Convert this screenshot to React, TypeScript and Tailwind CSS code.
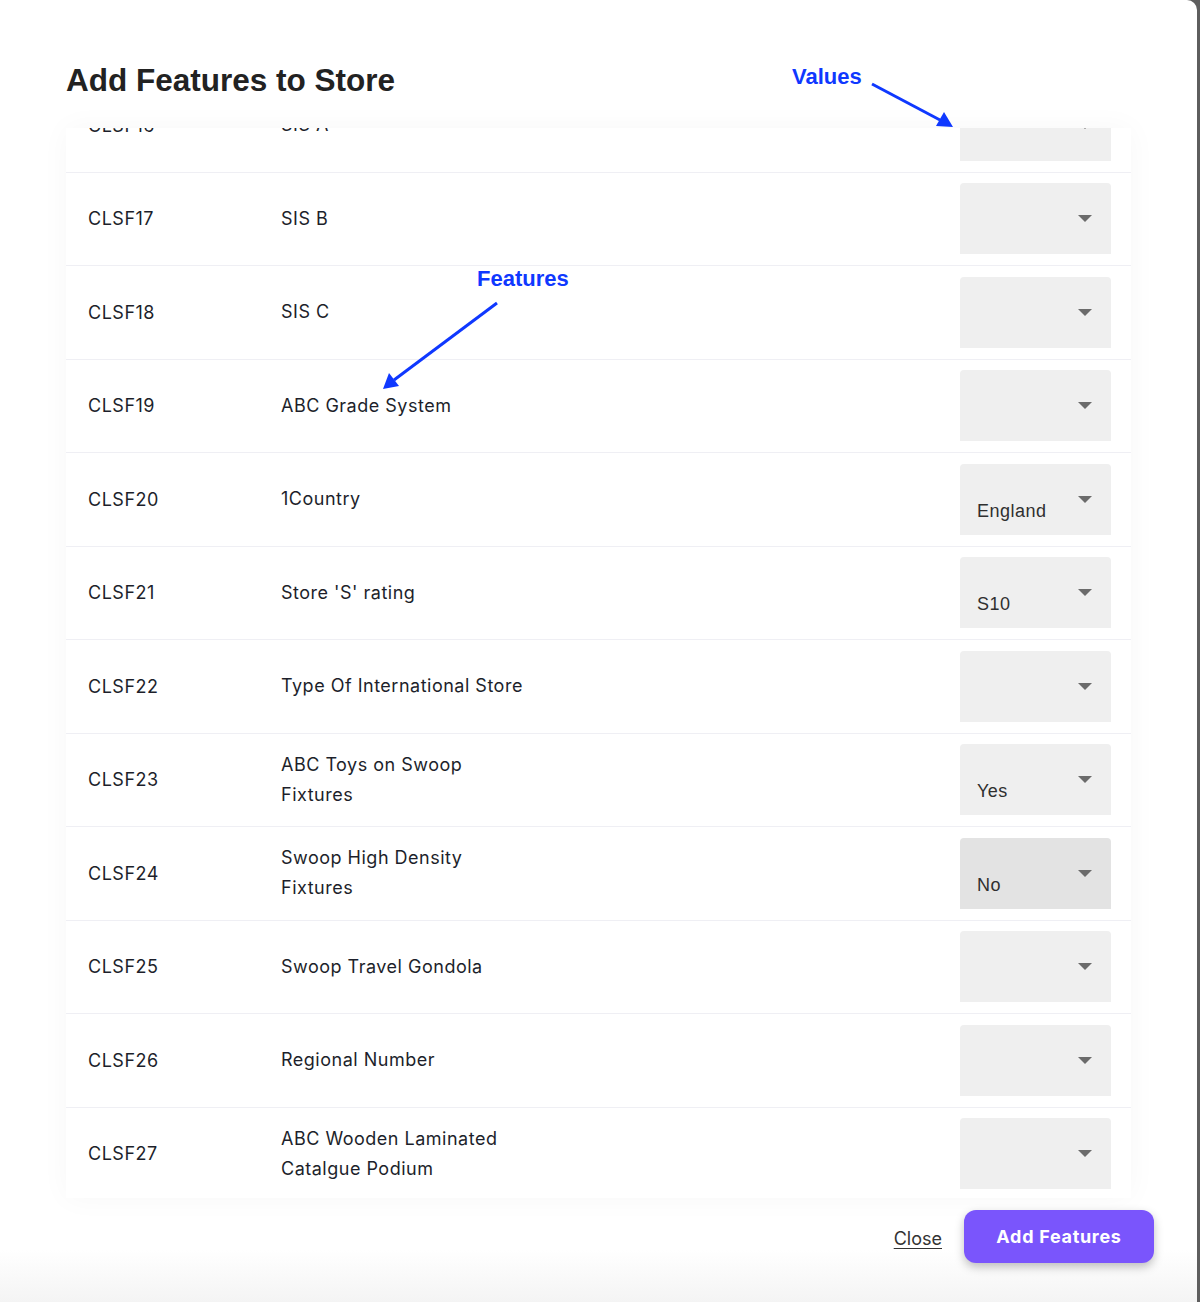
import React from "react";

type Row = { code: string; name: string[]; value?: string; hover?: boolean };

const rows: Row[] = [
  { code: "CLSF16", name: ["SIS A"] },
  { code: "CLSF17", name: ["SIS B"] },
  { code: "CLSF18", name: ["SIS C"] },
  { code: "CLSF19", name: ["ABC Grade System"] },
  { code: "CLSF20", name: ["1Country"], value: "England" },
  { code: "CLSF21", name: ["Store 'S' rating"], value: "S10" },
  { code: "CLSF22", name: ["Type Of International Store"] },
  { code: "CLSF23", name: ["ABC Toys on Swoop", "Fixtures"], value: "Yes" },
  { code: "CLSF24", name: ["Swoop High Density", "Fixtures"], value: "No", hover: true },
  { code: "CLSF25", name: ["Swoop Travel Gondola"] },
  { code: "CLSF26", name: ["Regional Number"] },
  { code: "CLSF27", name: ["ABC Wooden Laminated", "Catalgue Podium"] },
];

function SelectBox({ value, hover }: { value?: string; hover?: boolean }) {
  return (
    <div
      className={`relative w-[151px] h-[71px] rounded-t-[4px] ${hover ? "bg-[#e3e3e3]" : "bg-[#efefef]"}`}
    >
      {value && (
        <span
          className="absolute left-[17px] bottom-[15px] text-[18px] leading-none text-[#2f2f2f]"
          style={{ fontFamily: "'Liberation Sans', Arial, sans-serif" }}
        >
          {value}
        </span>
      )}
      <svg className="absolute right-[19px] top-[32px]" width="14" height="7" viewBox="0 0 14 7">
        <path d="M0 0 L14 0 L7 7 Z" fill="#6b6b6b" />
      </svg>
    </div>
  );
}

export default function App() {
  return (
    <div className="w-[1200px] h-[1302px] bg-[#5e5e5e] overflow-hidden">
      <div
        className="relative w-[1197px] h-[1302px] rounded-tr-[10px] overflow-hidden bg-gradient-to-b from-white from-[96%] to-[#f4f4f4] flex flex-col"
        style={{ fontFamily: "Inter, 'Noto Sans', sans-serif" }}
      >
        <div className="h-[128px] shrink-0 pl-[66px] pt-[61px]">
          <h1
            className="text-[31.5px] leading-[38px] font-bold text-[#222]"
            style={{ fontFamily: "'Liberation Sans', Arial, sans-serif" }}
          >
            Add Features to Store
          </h1>
        </div>

        <div className="mx-[66px] h-[1070px] shrink-0 overflow-hidden bg-white shadow-[0_0_28px_rgba(0,0,0,0.035)]">
          <div className="-mt-[49px]">
            {rows.map((r) => (
              <div
                key={r.code}
                className="h-[93.5px] flex items-center border-b border-[#efeff4] text-[18px] text-[#1d1f2b] tracking-[0.5px]"
              >
                <div className="w-[215px] pl-[22px] shrink-0">{r.code}</div>
                <div className="flex-1 leading-[30px]">
                  {r.name.map((n) => (
                    <div key={n}>{n}</div>
                  ))}
                </div>
                <div className="pr-[20px] shrink-0">
                  <SelectBox value={r.value} hover={r.hover} />
                </div>
              </div>
            ))}
          </div>
        </div>

        <div className="flex-1 flex items-start justify-end pr-[43px] pt-[12px] gap-[22px]">
          <button className="mt-[15px] text-[18px] text-[#333] underline underline-offset-[3px] decoration-1">
            Close
          </button>
          <button className="w-[190px] h-[53px] rounded-[12px] bg-[#7a55fc] text-white text-[18px] font-bold tracking-[0.7px] shadow-[0_4px_10px_rgba(0,0,0,0.25)]">
            Add Features
          </button>
        </div>

        {/* annotations */}
        <div
          className="absolute left-[792px] top-[63px] text-[22px] font-bold text-[#0f38ff] leading-[28px]"
          style={{ fontFamily: "'Liberation Sans', Arial, sans-serif" }}
        >
          Values
        </div>
        <div
          className="absolute left-[477px] top-[265px] text-[22px] font-bold text-[#0f38ff] leading-[28px]"
          style={{ fontFamily: "'Liberation Sans', Arial, sans-serif" }}
        >
          Features
        </div>
        <svg className="absolute left-0 top-0 pointer-events-none" width="1197" height="1302">
          <line x1="872" y1="84" x2="940" y2="120" stroke="#0f38ff" strokeWidth="3" />
          <path d="M953 127 L936 126 L944 112 Z" fill="#0f38ff" />
          <line x1="497" y1="303" x2="394" y2="380" stroke="#0f38ff" strokeWidth="3" />
          <path d="M383 389 L389 373 L399 386 Z" fill="#0f38ff" />
        </svg>
      </div>
    </div>
  );
}
